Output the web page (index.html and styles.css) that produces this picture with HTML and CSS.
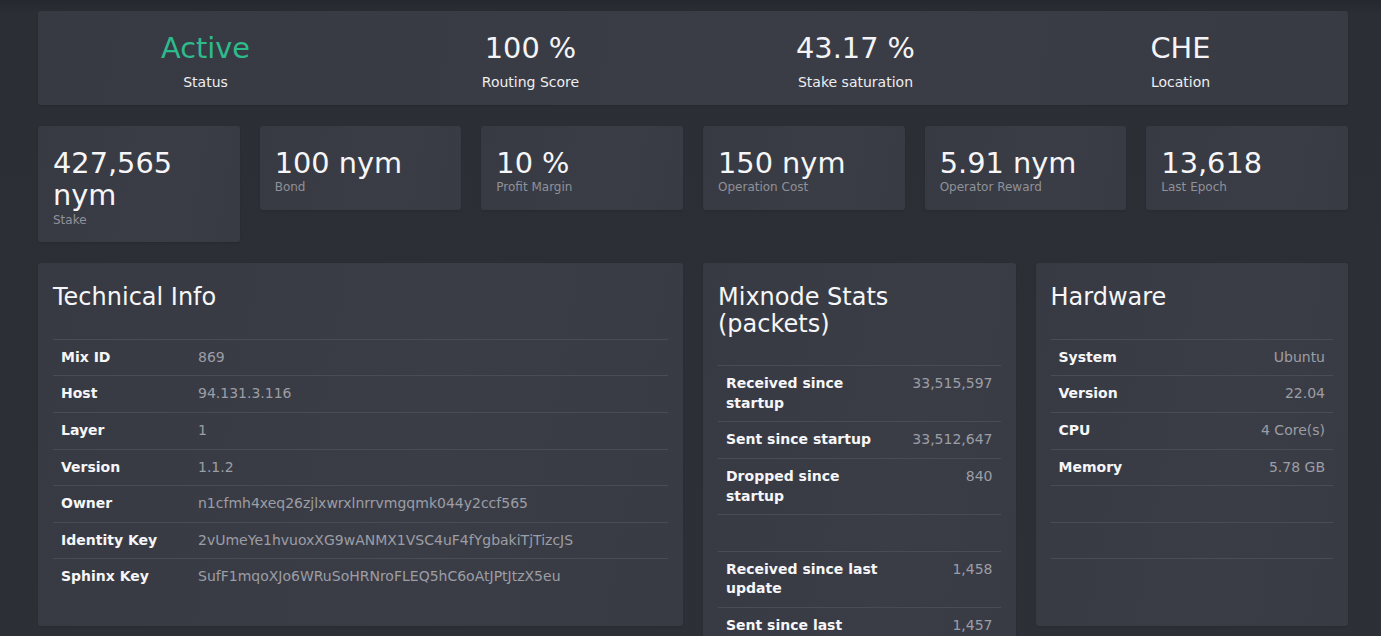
FILE: index.html
```html
<!DOCTYPE html>
<html>
<head>
<meta charset="utf-8">
<link rel="stylesheet" href="styles.css">
</head>
<body>
<div class="page">
  <div class="summary card">
    <div class="sum-item"><div class="sum-value green">Active</div><div class="sum-label">Status</div></div>
    <div class="sum-item"><div class="sum-value">100 %</div><div class="sum-label">Routing Score</div></div>
    <div class="sum-item"><div class="sum-value">43.17 %</div><div class="sum-label">Stake saturation</div></div>
    <div class="sum-item"><div class="sum-value">CHE</div><div class="sum-label">Location</div></div>
  </div>

  <div class="metrics">
    <div class="metric card"><div class="metric-value">427,565 nym</div><div class="metric-label">Stake</div></div>
    <div class="metric card"><div class="metric-value">100 nym</div><div class="metric-label">Bond</div></div>
    <div class="metric card"><div class="metric-value">10 %</div><div class="metric-label">Profit Margin</div></div>
    <div class="metric card"><div class="metric-value">150 nym</div><div class="metric-label">Operation Cost</div></div>
    <div class="metric card"><div class="metric-value">5.91 nym</div><div class="metric-label">Operator Reward</div></div>
    <div class="metric card"><div class="metric-value">13,618</div><div class="metric-label">Last Epoch</div></div>
  </div>

  <div class="panels">
    <div class="panel card">
      <h2 class="panel-title">Technical Info</h2>
      <table class="info tech">
        <tr><th>Mix ID</th><td>869</td></tr>
        <tr><th>Host</th><td>94.131.3.116</td></tr>
        <tr><th>Layer</th><td>1</td></tr>
        <tr><th>Version</th><td>1.1.2</td></tr>
        <tr><th>Owner</th><td>n1cfmh4xeq26zjlxwrxlnrrvmgqmk044y2ccf565</td></tr>
        <tr><th>Identity Key</th><td>2vUmeYe1hvuoxXG9wANMX1VSC4uF4fYgbakiTjTizcJS</td></tr>
        <tr><th>Sphinx Key</th><td>SufF1mqoXJo6WRuSoHRNroFLEQ5hC6oAtJPtJtzX5eu</td></tr>
      </table>
    </div>
    <div class="side">
      <div class="panel card">
        <h2 class="panel-title">Mixnode Stats (packets)</h2>
        <table class="info right">
          <tr><th>Received since startup</th><td>33,515,597</td></tr>
          <tr><th>Sent since startup</th><td>33,512,647</td></tr>
          <tr><th>Dropped since startup</th><td>840</td></tr>
          <tr><th>&nbsp;</th><td></td></tr>
          <tr><th>Received since last update</th><td>1,458</td></tr>
          <tr><th>Sent since last update</th><td>1,457</td></tr>
          <tr><th>Dropped since last update</th><td>0</td></tr>
        </table>
      </div>
      <div class="panel card">
        <h2 class="panel-title">Hardware</h2>
        <table class="info right">
          <tr><th>System</th><td>Ubuntu</td></tr>
          <tr><th>Version</th><td>22.04</td></tr>
          <tr><th>CPU</th><td>4 Core(s)</td></tr>
          <tr><th>Memory</th><td>5.78 GB</td></tr>
          <tr><th>&nbsp;</th><td></td></tr>
          <tr><th>&nbsp;</th><td></td></tr>
          <tr><th>&nbsp;</th><td></td></tr>
        </table>
      </div>
    </div>
  </div>
</div>
</body>
</html>
```

FILE: styles.css
```css
html, body {
  margin: 0;
  padding: 0;
}
body {
  background: linear-gradient(180deg, #26282f 0px, #2c2e36 14px, #2e3038 100%);
  font-family: "DejaVu Sans", sans-serif;
  color: #f2f2f4;
  min-height: 100vh;
}
.page {
  width: 1310px;
  padding: 11px 0 0 38px;
}
.card {
  background: linear-gradient(100deg, #383a43 0%, #3b3d46 60%, #393b44 100%);
  border-radius: 3px;
  box-shadow: 0 1px 2px rgba(0, 0, 0, 0.12);
}

/* summary */
.summary {
  display: grid;
  grid-template-columns: repeat(4, 1fr);
  padding: 21px 5px 13px;
  margin-bottom: 21px;
  text-align: center;
}
.sum-value {
  font-size: 28.8px;
  line-height: 33.5px;
  margin-bottom: 6px;
  color: #f4f4f6;
}
.sum-value.green {
  color: #2dbb8d;
}
.sum-label {
  font-size: 14px;
  line-height: 20px;
  color: #eeeef0;
}

/* metrics */
.metrics {
  display: grid;
  grid-template-columns: repeat(6, 1fr);
  gap: 20px;
  align-items: start;
  margin-bottom: 21px;
}
.metric {
  padding: 21px 15px 15px;
}
.metric-value {
  font-size: 28.8px;
  line-height: 32.7px;
  color: #f6f6f8;
}
.metric-label {
  margin-top: 1px;
  font-size: 12px;
  line-height: 14.4px;
  color: #8f9199;
}

/* panels */
.panels {
  display: grid;
  grid-template-columns: 1fr 1fr;
  gap: 20px;
  align-items: start;
}
.side {
  display: grid;
  grid-template-columns: 1fr 1fr;
  gap: 20px;
  align-items: start;
}
.panel {
  padding: 21px 15px 16px;
}
.panel-title {
  margin: 0 0 28px;
  font-size: 24px;
  line-height: 26.4px;
  font-weight: normal;
  color: #f6f6f8;
}
.info {
  width: 100%;
  border-collapse: collapse;
  margin-bottom: 15px;
  font-size: 14px;
  line-height: 1.4;
}
.info th,
.info td {
  border-top: 1px solid #4a4c55;
  padding: 8px;
  vertical-align: top;
}
.info th {
  text-align: left;
  font-weight: bold;
  color: #f6f6f8;
}
.info td {
  color: #9c9ea6;
}
.tech th {
  width: 121px;
}
.right td {
  text-align: right;
  white-space: nowrap;
  width: 1%;
}
```
